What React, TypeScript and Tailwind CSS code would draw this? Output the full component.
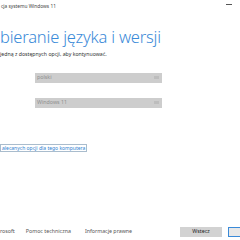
import React, { FC } from 'react';

const Dropdown: FC<{ label: string }> = ({ label }) => (
  <div className="ml-[35px] w-[127px] h-[10px] bg-[#cdcdcd] flex items-center justify-between pl-[2px] pr-[3px]">
    <span className="text-[5.3px] leading-none text-[#8f8f8f]">{label}</span>
    <span className="w-[5px] h-[3px] bg-[#bdbdbd]"></span>
  </div>
);

const App: FC = () => {
  return (
    <div className="w-[240px] h-[240px] bg-white overflow-hidden flex flex-col font-['Noto_Sans',_'Liberation_Sans',_sans-serif]">
      {/* title bar */}
      <div className="h-[12px] flex items-center justify-between shrink-0">
        <span className="text-[4.8px] leading-none text-[#444] pl-[1px] pt-[1px]">cja systemu Windows 11</span>
        <span className="w-[6px] h-[1px] bg-[#555] mr-[8px] mb-[4px]"></span>
      </div>

      <h1 className="mt-[17px] text-[16.5px] leading-none font-light text-[#3a8ad8] whitespace-nowrap tracking-[-0.2px]">
        bieranie języka i wersji
      </h1>
      <p className="mt-[6px] text-[5.2px] leading-none text-[#333] whitespace-nowrap">
        jedną z dostępnych opcji, aby kontynuować.
      </p>

      <div className="mt-[16px] flex flex-col gap-[15px]">
        <Dropdown label="polski" />
        <Dropdown label="Windows 11" />
      </div>

      <div className="mt-[36px] flex">
        <span className="border border-[#a9bccd] px-[1px] text-[5px] leading-[6px] text-[#2f7fd0] whitespace-nowrap">
          alecanych opcji dla tego komputera
        </span>
      </div>

      {/* footer */}
      <div className="mt-auto mb-[3px] h-[10px] flex items-center">
        <span className="text-[5.3px] leading-none text-[#555]">rosoft</span>
        <span className="ml-[11px] text-[5.3px] leading-none text-[#555]">Pomoc techniczna</span>
        <span className="ml-[14px] text-[5.3px] leading-none text-[#555]">Informacje prawne</span>
        <button className="ml-auto w-[42px] h-[10px] bg-[#d2d2d2] text-[5.3px] leading-none text-[#222] flex items-center justify-center">
          Wstecz
        </button>
        <button className="ml-[6px] w-[14px] h-[10px] border border-[#3a8ad8] bg-[#e8e8e8] -mr-[2px]"></button>
      </div>
    </div>
  );
};

export default App;
